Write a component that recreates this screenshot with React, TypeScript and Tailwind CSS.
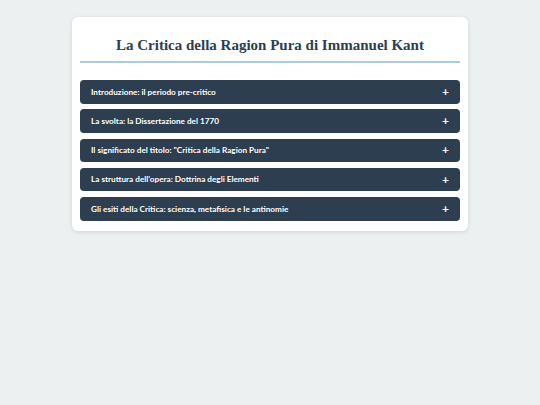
import React, { useState } from "react";

const sections = [
  "Introduzione: il periodo pre-critico",
  "La svolta: la Dissertazione del 1770",
  'Il significato del titolo: "Critica della Ragion Pura"',
  "La struttura dell'opera: Dottrina degli Elementi",
  "Gli esiti della Critica: scienza, metafisica e le antinomie",
];

export default function App() {
  const [open, setOpen] = useState<number | null>(null);

  return (
    <div
      className="min-h-screen w-full bg-[#ecf0f1] pt-[17px]"
      style={{ fontFamily: "Lato, 'Noto Sans', sans-serif" }}
    >
      <div className="mx-auto w-[396px] rounded-md bg-white px-2 pb-[10px] pt-[19px] shadow-[0_1px_4px_rgba(0,0,0,0.12)]">
        <h1
          className="mb-[17px] border-b-2 border-[#a9cce3] pb-[7px] text-center text-[15px] font-bold leading-[18px] text-[#2c3e50]"
          style={{ fontFamily: "'Liberation Serif', serif" }}
        >
          La Critica della Ragion Pura di Immanuel Kant
        </h1>
        <div className="flex flex-col gap-[5.75px]">
          {sections.map((title, i) => (
            <button
              key={i}
              onClick={() => setOpen(open === i ? null : i)}
              className="flex h-[23.5px] w-full items-center justify-between rounded-[4px] bg-[#2c3e50] px-[11px] text-left text-[8.2px] font-bold text-white"
            >
              <span>{title}</span>
              <span className="text-[12px] leading-none">{open === i ? "−" : "+"}</span>
            </button>
          ))}
        </div>
      </div>
    </div>
  );
}
